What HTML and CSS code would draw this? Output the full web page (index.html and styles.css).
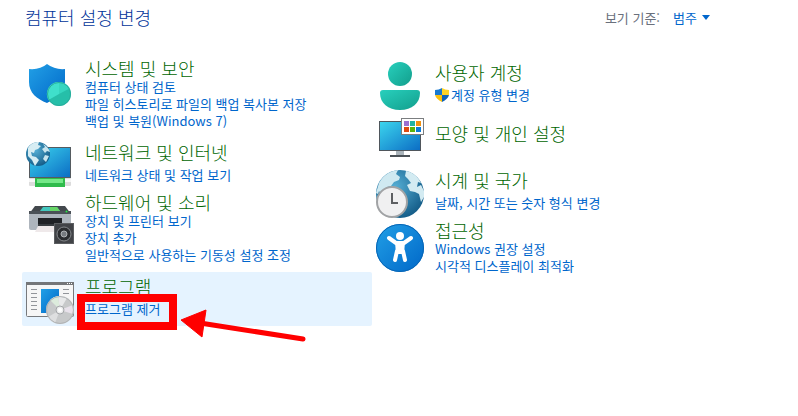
FILE: index.html
```
<!DOCTYPE html>
<html lang="ko">
  <head>
    <meta charset="UTF-8" />
    <title>제어판</title>
    <link rel="stylesheet" href="styles.css">
  </head>
  <body>
    <header>
      <h1>컴퓨터 설정 변경</h1>
      <div class="view-by">
        <label for="viewBy">보기 기준:</label>
        <span class="select-wrap">
          <select id="viewBy">
            <option>범주</option>
          </select>
          <svg class="caret" viewBox="0 0 8 5"><path d="M0 0h8L4 5z" /></svg>
        </span>
      </div>
    </header>

    <main>
      <div class="column">
        <section class="item multi">
          <svg class="icon" viewBox="0 0 48 48">
            <defs>
              <linearGradient id="blue" x1="0" y1="0" x2="1" y2="1">
                <stop offset="0" stop-color="#22a0e6" />
                <stop offset="1" stop-color="#0067c8" />
              </linearGradient>
              <linearGradient id="teal" x1="0" y1="0" x2="1" y2="1">
                <stop offset="0" stop-color="#28d0bd" />
                <stop offset="1" stop-color="#129e8c" />
              </linearGradient>
              <linearGradient id="screen" x1="0" y1="0" x2="1" y2="1">
                <stop offset="0" stop-color="#3cd6ee" />
                <stop offset="1" stop-color="#0b6cc4" />
              </linearGradient>
              <radialGradient id="globe" cx="0.4" cy="0.35" r="0.7">
                <stop offset="0" stop-color="#55aed4" />
                <stop offset="1" stop-color="#125a86" />
              </radialGradient>
            </defs>
            <path d="M3 8q11 1 18-5 8 6 18 5v13c0 11-8 16-18 21C11 38 3 32 3 21z" fill="url(#blue)" />
            <circle cx="33" cy="33" r="12" fill="#26bfa9" />
            <path d="M33 33V21a12 12 0 0 0-10.500 18z" fill="#3fe0cb" />
            <path d="M33 33V21a12 12 0 0 1 10.500 6.500z" fill="#35d6bf" />
            <circle cx="33" cy="33" r="11.500" fill="none" stroke="#28ad9c" />
          </svg>
          <div class="text">
            <h2><a href="#">시스템 및 보안</a></h2>
            <a href="#">컴퓨터 상태 검토</a>
            <a href="#">파일 히스토리로 파일의 백업 복사본 저장</a>
            <a href="#">백업 및 복원(Windows 7)</a>
          </div>
        </section>

        <section class="item">
          <svg class="icon" viewBox="0 0 48 48">
            <rect x="3.500" y="6.500" width="41" height="30" fill="url(#screen)" stroke="#555b60" />
            <rect x="3" y="37" width="42" height="8" rx="1" fill="#dcdcdc" />
            <rect x="3" y="38" width="42" height="3" fill="#f6f6f6" />
            <rect x="9" y="37" width="30" height="9" fill="#2fbb4c" />
            <rect x="11" y="38" width="26" height="4" fill="#74e888" />
            <circle cx="12" cy="13" r="12" fill="url(#globe)" />
            <path d="M2 7c3-5 7-6 11-6l-1 3 3 1-3 3-3 1-1 3-3-1 1 4 4 1 3 3-2 3-2 3-3-6-4-4z" fill="#d7edf3" />
            <path d="M17 3c4 2 6 5 7 8l-3-1-2 2-3-4 3-2zM19 14l4 1-3 6-3-3z" fill="#c6e4ee" />
          </svg>
          <div class="text">
            <h2><a href="#">네트워크 및 인터넷</a></h2>
            <a href="#">네트워크 상태 및 작업 보기</a>
          </div>
        </section>

        <section class="item multi">
          <svg class="icon" viewBox="0 0 48 48">
            <path d="M9 11h30l6 8H3z" fill="#43484d" />
            <path d="M17 12h14l3 4H14z" fill="#43c7bd" />
            <path d="M24 12h7l3 4H24z" fill="#67d667" />
            <rect x="3" y="18" width="42" height="17" rx="2" fill="#aeb5bd" />
            <path d="M3 16h42v3H3z" fill="#4b5157" />
            <circle cx="40.500" cy="16.500" r="1" fill="#25ec44" />
            <path d="M12 23h24v8H12z" fill="#202226" />
            <path d="M12 31h24l3 6H9z" fill="#efe9ea" />
            <path d="M12 29h24v2H12z" fill="#383c40" />
            <rect x="28.500" y="28.500" width="19" height="20" fill="#414347" stroke="#5c5e61" />
            <circle cx="38" cy="39" r="7" fill="#2b2d30" stroke="#85888c" />
            <circle cx="38" cy="39" r="3" fill="#777b80" stroke="#b0b3b6" />
          </svg>
          <div class="text">
            <h2><a href="#">하드웨어 및 소리</a></h2>
            <a href="#">장치 및 프린터 보기</a>
            <a href="#">장치 추가</a>
            <a href="#">일반적으로 사용하는 기동성 설정 조정</a>
          </div>
        </section>

        <section class="item selected">
          <svg class="icon" viewBox="0 0 48 48">
            <rect x="0.500" y="7.500" width="47" height="34" rx="1" fill="#f6f6f6" stroke="#77797c" />
            <path d="M0 7h48v3H0z" fill="#747679" />
            <path d="M41 8h1v1h-1zM43 8h1v1h-1zM45 8h1v1h-1z" fill="#fff" />
            <path d="M5 14.500h6M5 18.500h6M5 22.500h6M5 26.500h6M5 30.500h6M5 34.500h6M37 14.500h6M37 18.500h6" stroke="#92959a" />
            <rect x="15" y="14" width="18" height="24" fill="url(#blue)" />
            <circle cx="34" cy="35" r="14" fill="#c7c9ca" />
            <path d="M34 35L24 25a14 14 0 0 1 8-4z" fill="#dcebdc" />
            <path d="M34 35l-2-14a14 14 0 0 1 9 2z" fill="#e8e9ea" />
            <path d="M34 35l13-5a14 14 0 0 1 0 9z" fill="#e8e2eb" />
            <path d="M34 35l-5 13a14 14 0 0 1-7-6z" fill="#dedfe0" />
            <circle cx="34" cy="35" r="13.500" fill="none" stroke="#b0b3b5" />
            <circle cx="34" cy="35" r="4" fill="#eceded" stroke="#a4a7aa" />
            <circle cx="34" cy="35" r="2" fill="#fff" />
          </svg>
          <div class="text">
            <h2><a href="#">프로그램</a></h2>
            <a href="#">프로그램 제거</a>
          </div>
          <div class="mark"></div>
          <svg class="arrow" viewBox="0 0 130 40">
            <path d="M20 10L123 26" stroke="#f00" stroke-width="5" stroke-linecap="round" />
            <path d="M1 7L26-3 22 24z" fill="#f00" stroke="#f00" stroke-linejoin="round" />
          </svg>
        </section>
      </div>

      <div class="column">
        <section class="item">
          <svg class="icon" viewBox="0 0 48 48">
            <circle cx="24" cy="13" r="12" fill="url(#teal)" />
            <path d="M7 29h34q3 0 3 3c0 10-8 17-20 17S4 42 4 32q0-3 3-3z" fill="url(#teal)" />
          </svg>
          <div class="text">
            <h2><a href="#">사용자 계정</a></h2>
            <a href="#" class="with-shield">
              <svg class="shield" viewBox="0 0 14 14">
                <path d="M7 0v7H0V2q4 0 7-2z" fill="#1979d0" />
                <path d="M7 0v7h7V2q-4 0-7-2z" fill="#ffd426" />
                <path d="M0 7h7v7Q1 11 0 7z" fill="#fbc00f" />
                <path d="M14 7H7v7q6-3 7-7z" fill="#1264b8" />
              </svg>계정 유형 변경</a>
          </div>
        </section>

        <section class="item solo">
          <svg class="icon" viewBox="0 0 48 48">
            <rect x="20" y="35" width="8" height="6" fill="#aab4bb" />
            <rect x="14" y="40" width="20" height="2" fill="#4a5157" />
            <rect x="3.500" y="6.500" width="41" height="29" fill="url(#screen)" stroke="#4f565c" />
            <rect x="25.500" y="3.500" width="22" height="16" fill="#fff" stroke="#7b7e80" />
            <rect x="28" y="6" width="5" height="5" fill="#9d70d3" />
            <rect x="34" y="6" width="5" height="5" fill="#20b2a4" />
            <rect x="40" y="6" width="5" height="5" fill="#f29111" />
            <rect x="28" y="12" width="5" height="5" fill="#df4a12" />
            <rect x="34" y="12" width="5" height="5" fill="#5bb40c" />
            <rect x="40" y="12" width="5" height="5" fill="#0b7bd7" />
          </svg>
          <div class="text">
            <h2><a href="#">모양 및 개인 설정</a></h2>
          </div>
        </section>

        <section class="item">
          <svg class="icon" viewBox="0 0 48 48">
            <circle cx="24" cy="25" r="24" fill="url(#globe)" />
            <path d="M3 14C8 5 15 2 22 1l-2 4 4 3-1 3-5 2-3 4-4 1-2 4-4 3-2-3-1 3-2-1z" fill="#cfe9f1" />
            <path d="M30 2c7 1 12 6 15 12l-3-1-1 5 4-2 3 6v6l-3 5-2-8-4-2-5-1-3-6 4-2-3-4-3-3z" fill="#d3ebf2" />
            <circle cx="16" cy="33" r="15" fill="#f0f0f1" stroke="#a1a3a5" stroke-width="2" />
            <path d="M16 24v10h6" fill="none" stroke="#5d5f62" stroke-width="2" />
          </svg>
          <div class="text">
            <h2><a href="#">시계 및 국가</a></h2>
            <a href="#">날짜, 시간 또는 숫자 형식 변경</a>
          </div>
        </section>

        <section class="item multi">
          <svg class="icon" viewBox="0 0 48 48">
            <circle cx="24" cy="25" r="24" fill="url(#blue)" />
            <circle cx="24" cy="25" r="23.500" fill="none" stroke="#0765b5" />
            <circle cx="24" cy="13" r="4" fill="#fff" />
            <path d="M13 15l7 5h8l7-5M19 37l2-9h6l2 9" fill="none" stroke="#fff" stroke-width="4" stroke-linecap="round" stroke-linejoin="round" />
            <path d="M19 19h10l-1 12h-8z" fill="#fff" />
          </svg>
          <div class="text">
            <h2><a href="#">접근성</a></h2>
            <a href="#">Windows 권장 설정</a>
            <a href="#">시각적 디스플레이 최적화</a>
          </div>
        </section>
      </div>
    </main>
  </body>
</html>
```
FILE: styles.css
```
body {
  margin: 0;
  padding: 0 22px;
  min-height: 100vh;
  box-sizing: border-box;
  font-family: "Noto Sans CJK KR", sans-serif;
  font-size: 13px;
  line-height: 17px;
  background-color: white;
}

header {
  display: flex;
  justify-content: space-between;
  align-items: center;
  max-width: 700px;
  box-sizing: border-box;
  padding: 7px 12px 0 3px;
}

h1 {
  margin: 0;
  font-size: 18px;
  font-weight: 300;
  line-height: 20px;
  color: #003399;
}

.view-by {
  display: flex;
  align-items: center;
  gap: 13px;
  color: #6a707c;
}

.select-wrap {
  display: flex;
  align-items: center;
  gap: 5px;
}

select {
  appearance: none;
  border: none;
  padding: 0;
  background: none;
  font: inherit;
  color: #0066cc;
  cursor: pointer;
}

.caret {
  width: 8px;
  height: 5px;
  fill: #0066cc;
}

main {
  display: grid;
  grid-template-columns: 1fr 1fr;
  max-width: 700px;
  margin-top: 31px;
}

.item {
  display: flex;
  gap: 11px;
  padding: 3px 4px;
}

.icon {
  flex: none;
  width: 48px;
  height: 48px;
  overflow: visible;
}

.text {
  display: flex;
  flex-direction: column;
  align-items: flex-start;
  padding-top: 1px;
}

h2 {
  margin: 0 0 4px;
  font-size: 18px;
  font-weight: 300;
  line-height: 20px;
}

a {
  color: #0066cc;
  text-decoration: none;
}

a:hover {
  text-decoration: underline;
}

h2 a {
  color: #006600;
}

.multi {
  margin-bottom: 6px;
}

.multi .text {
  padding-top: 0;
  margin-top: -3px;
}

.multi h2 {
  margin-bottom: 0;
}

.solo .text {
  padding-top: 8px;
}

.with-shield {
  display: flex;
  align-items: center;
  gap: 2px;
}

.shield {
  width: 14px;
  height: 14px;
}

.selected {
  position: relative;
  background-color: #e5f3ff;
  border-radius: 2px;
}

.mark {
  position: absolute;
  left: 55px;
  top: 22px;
  width: 84px;
  height: 20px;
  border: 8px solid #f00;
}

.arrow {
  position: absolute;
  left: 158px;
  top: 41px;
  width: 130px;
  height: 40px;
  overflow: visible;
}
```
